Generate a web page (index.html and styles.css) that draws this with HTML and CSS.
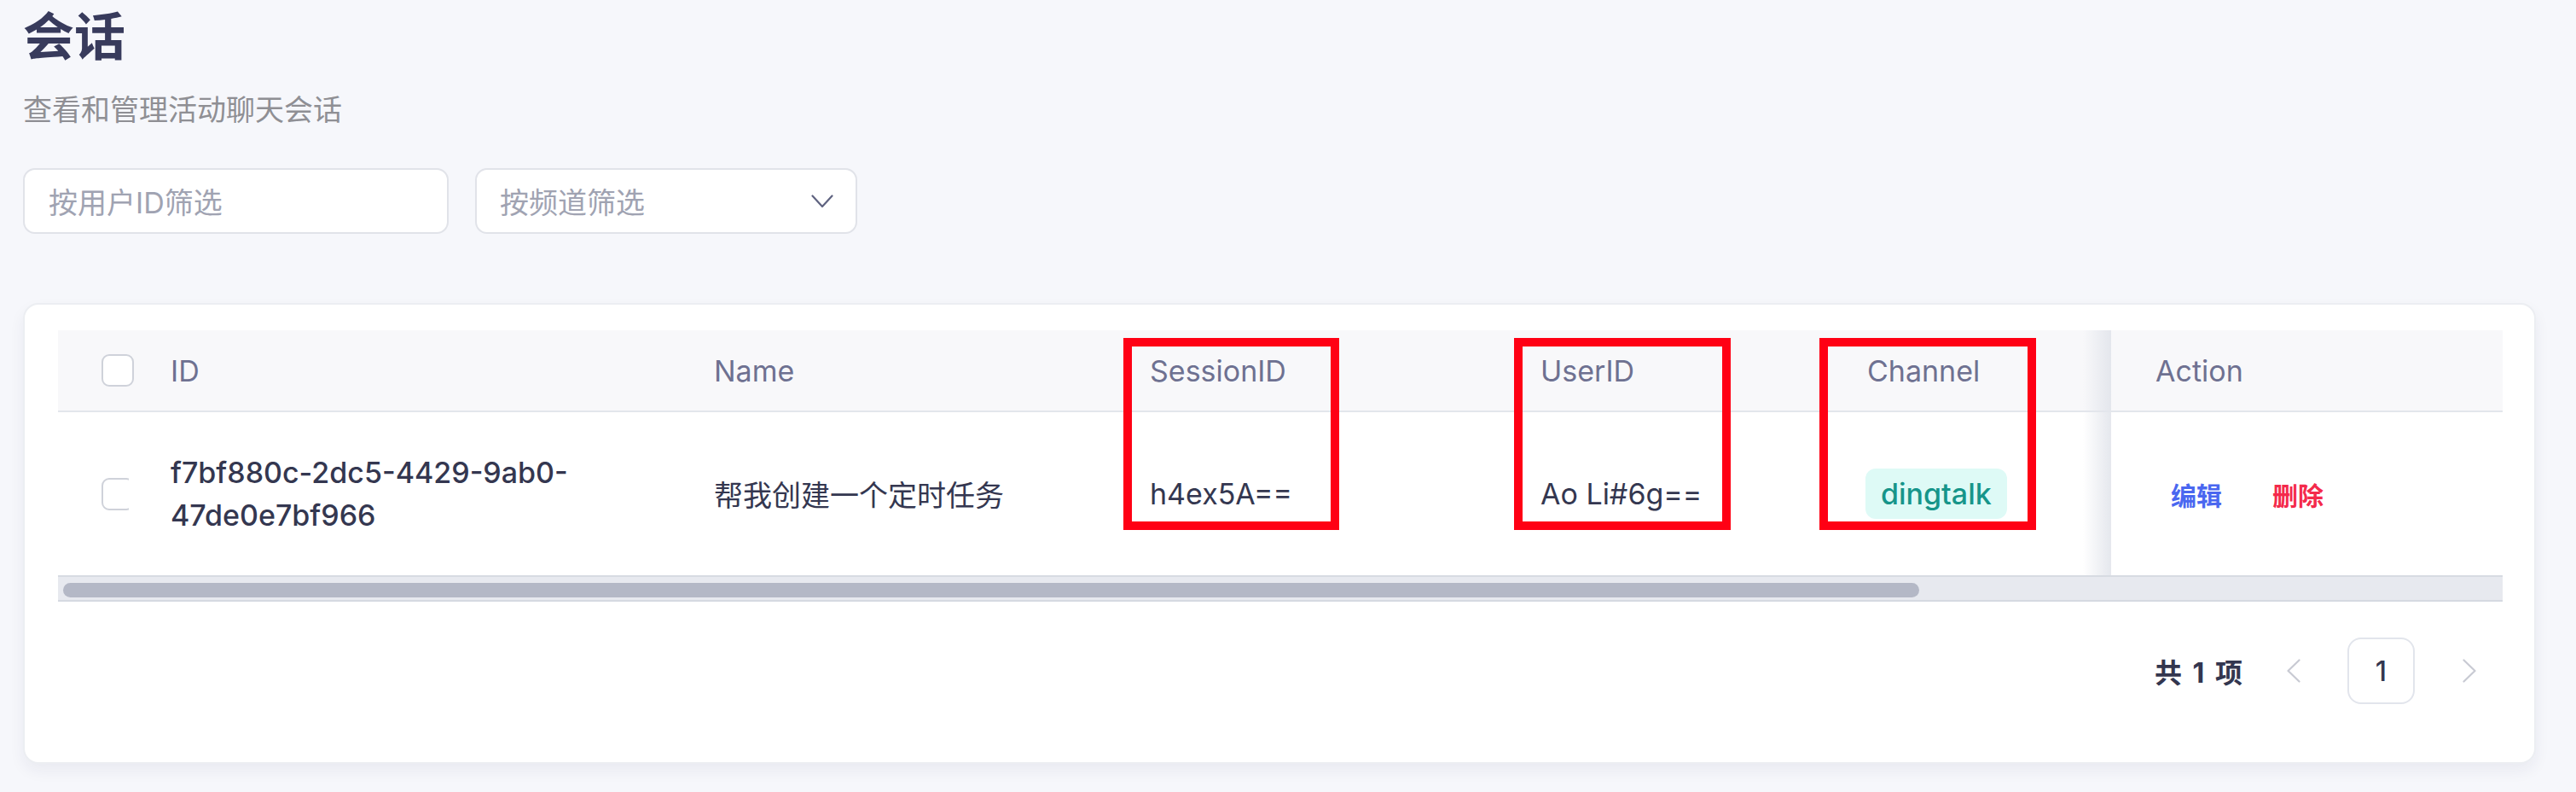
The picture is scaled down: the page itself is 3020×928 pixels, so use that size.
FILE: index.html
```html
<!DOCTYPE html>
<html lang="zh-CN">
<head>
<meta charset="utf-8">
<title>会话</title>
<link rel="stylesheet" href="styles.css">
</head>
<body>
<main class="page">
  <h1 class="title">会话</h1>
  <p class="subtitle">查看和管理活动聊天会话</p>
  <div class="filters">
    <div class="input">按用户ID筛选</div>
    <div class="select">
      <span>按频道筛选</span>
      <svg class="chev" width="26" height="16" viewBox="0 0 26 16"><path d="M1.5 1.5 L13 14 L24.5 1.5" fill="none" stroke="#5f6380" stroke-width="2.2" stroke-linecap="round" stroke-linejoin="round"/></svg>
    </div>
  </div>

  <section class="card">
    <div class="table">
      <div class="row head">
        <div class="cell c-check"><span class="checkbox"></span></div>
        <div class="cell">ID</div>
        <div class="cell">Name</div>
        <div class="cell">SessionID</div>
        <div class="cell">UserID</div>
        <div class="cell">Channel</div>
        <div class="cell c-action">Action</div>
      </div>
      <div class="row body">
        <div class="cell c-check"><span class="clip"><span class="checkbox"></span></span></div>
        <div class="cell c-id">f7bf880c-2dc5-4429-9ab0-47de0e7bf966</div>
        <div class="cell">帮我创建一个定时任务</div>
        <div class="cell">h4ex5A==</div>
        <div class="cell">Ao Li#6g==</div>
        <div class="cell"><span class="tag">dingtalk</span></div>
        <div class="cell c-action"><a class="link edit">编辑</a><a class="link del">删除</a></div>
      </div>
      <div class="scrollbar"><div class="thumb"></div></div>
    </div>

    <div class="pager">
      <span class="total">共 1 项</span>
      <span class="pbtn"><svg width="16" height="28" viewBox="0 0 16 28"><path d="M14.5 1.5 L1.5 14 L14.5 26.5" fill="none" stroke="#c8cad3" stroke-width="2.2" stroke-linecap="round" stroke-linejoin="round"/></svg></span>
      <span class="pbtn page-num">1</span>
      <span class="pbtn"><svg width="16" height="28" viewBox="0 0 16 28"><path d="M1.5 1.5 L14.5 14 L1.5 26.5" fill="none" stroke="#c8cad3" stroke-width="2.2" stroke-linecap="round" stroke-linejoin="round"/></svg></span>
    </div>

    <div class="mark mark-session"></div>
    <div class="mark mark-user"></div>
    <div class="mark mark-channel"></div>
  </section>
</main>
</body>
</html>
```

FILE: styles.css
```css
* { box-sizing: border-box; }
html, body { margin: 0; padding: 0; }
body {
  background: #f6f7fb;
  font-family: Inter, "Noto Sans CJK SC", sans-serif;
  color: #343750;
  width: 3020px;
  height: 928px;
  overflow: hidden;
}
.page {
  padding: 7px 47px 0 27px;
}
.title {
  margin: 0;
  font-size: 60px;
  line-height: 72px;
  font-weight: 700;
  color: #383b5c;
}
.subtitle {
  margin: 29px 0 0;
  font-size: 34px;
  line-height: 41px;
  color: #8f8f94;
}
.filters {
  display: flex;
  gap: 31px;
  margin-top: 48px;
}
.input, .select {
  height: 77px;
  background: #fff;
  border: 2px solid #e1e3e9;
  border-radius: 14px;
  font-size: 34px;
  color: #a0a3b2;
  display: flex;
  align-items: center;
}
.input { width: 499px; padding-left: 28px; }
.select {
  width: 448px;
  padding: 0 26px 0 27px;
  justify-content: space-between;
}
.card {
  position: relative;
  margin-top: 81px;
  height: 540px;
  background: #fff;
  border: 2px solid #eceef2;
  border-radius: 18px;
  box-shadow: 0 8px 18px rgba(30, 40, 80, 0.06);
  padding: 30px 37px 0 39px;
}
.table { width: 2866px; }
.row {
  display: grid;
  grid-template-columns: 100px 637px 511px 458px 383px 318px 459px;
}
.head {
  height: 96px;
  background: #f8f8fa;
  border-bottom: 2px solid #e3e6ec;
  color: #6e7191;
  font-size: 34px;
}
.body {
  height: 191px;
  font-size: 34px;
  color: #343750;
}
.cell {
  display: flex;
  align-items: center;
  padding-left: 32px;
}
.c-check { padding-left: 51px; }
.c-id {
  font-weight: 500;
  line-height: 50px;
  padding-right: 40px;
}
.c-action {
  position: relative;
  padding-left: 52px;
}
.head .c-action { background: #f8f8fa; }
.body .c-action { background: #fff; padding-left: 70px; }
.c-action::before {
  content: "";
  position: absolute;
  left: -33px;
  top: 0;
  bottom: 0;
  width: 33px;
  background: linear-gradient(to right, rgba(226, 229, 236, 0), rgba(224, 227, 234, 0.85));
}
.checkbox {
  display: block;
  width: 38px;
  height: 38px;
  border: 2px solid #cfd2da;
  border-radius: 9px;
  background: #fff;
}
.clip {
  display: block;
  width: 32px;
  height: 38px;
  overflow: hidden;
}
.tag {
  display: inline-flex;
  align-items: center;
  height: 59px;
  padding: 0 18px;
  margin-left: -2px;
  border-radius: 12px;
  background: #defaf6;
  color: #16958a;
  font-weight: 500;
}
.link {
  font-size: 30px;
  font-weight: 600;
  margin-right: 59px;
}
.edit { color: #4a67f0; }
.del { color: #f42a4b; }
.scrollbar {
  height: 31px;
  background: #e7e9ef;
  border-top: 2px solid #d7dbe2;
  border-bottom: 2px solid #d5d9e1;
  padding: 7px 0 0 6px;
}
.thumb {
  width: 2176px;
  height: 17px;
  border-radius: 9px;
  background: #b4b8c6;
}
.pager {
  display: flex;
  justify-content: flex-end;
  align-items: center;
  width: 2866px;
  margin-top: 42px;
  gap: 24px;
}
.total {
  font-size: 32px;
  font-weight: 700;
  color: #33364f;
  word-spacing: 5px;
  margin-right: -4px;
}
.pbtn {
  width: 79px;
  height: 78px;
  display: flex;
  align-items: center;
  justify-content: center;
}
.page-num {
  border: 2px solid #e2e5ec;
  border-radius: 16px;
  font-size: 32px;
  font-weight: 500;
  color: #33364f;
}
.mark {
  position: absolute;
  top: 39px;
  height: 225px;
  border: 10px solid #ff0014;
}
.mark-session { left: 1288px; width: 253px; }
.mark-user { left: 1746px; width: 254px; }
.mark-channel { left: 2104px; width: 254px; }
```
